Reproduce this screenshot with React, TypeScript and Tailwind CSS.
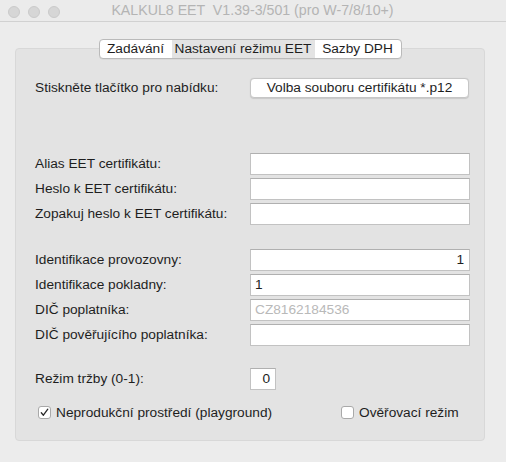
import React from "react";

const font = { fontFamily: '"Liberation Sans", Arial, sans-serif' };

function Field({ label, value, align = "left", muted = false }: { label: string; value?: string; align?: "left" | "right"; muted?: boolean }) {
  return (
    <div className="flex items-center h-[22px]">
      <div className="w-[215px] text-[13.7px] text-[#1e1e1e] leading-none">{label}</div>
      <div
        className={`w-[220px] h-[22px] bg-white border border-[#c2c2c2] border-t-[#b0b0b0] flex items-center text-[13.7px] leading-none ${
          align === "right" ? "justify-end pr-[5px]" : "justify-start pl-[4px]"
        } ${muted ? "text-[#b9b9b9]" : "text-[#1e1e1e]"}`}
      >
        {value}
      </div>
    </div>
  );
}

function Checkbox({ checked, label }: { checked: boolean; label: string }) {
  return (
    <div className="flex items-center gap-[5px]">
      <div className="w-[13px] h-[13px] rounded-[3px] bg-white border border-[#a9a9a9] flex items-center justify-center">
        {checked && (
          <svg width="9" height="9" viewBox="0 0 9 9">
            <path d="M1.3 4.8 L3.4 7.2 L7.8 1.2" fill="none" stroke="#2a2a2a" strokeWidth="1.3" strokeLinecap="round" strokeLinejoin="round" />
          </svg>
        )}
      </div>
      <span className="text-[13.7px] text-[#1e1e1e] leading-none">{label}</span>
    </div>
  );
}

export default function App() {
  return (
    <div className="w-[506px] h-[462px] bg-[#ececec] overflow-hidden" style={font}>
      {/* title bar */}
      <div className="relative h-[22px] bg-[#ebebeb] border-b border-[#d1d1d1] flex items-center justify-center">
        <div className="absolute left-[8px] top-[6px] flex gap-[8px]">
          <div className="w-[12px] h-[12px] rounded-full bg-[#d6d6d6] border border-[#cacaca]" />
          <div className="w-[12px] h-[12px] rounded-full bg-[#d6d6d6] border border-[#cacaca]" />
          <div className="w-[12px] h-[12px] rounded-full bg-[#d6d6d6] border border-[#cacaca]" />
        </div>
        <span className="text-[14.2px] text-[#b4b4b4] whitespace-pre leading-none pr-[1px]">KALKUL8 EET  V1.39-3/501 (pro W-7/8/10+)</span>
      </div>

      <div className="pt-[17px] pl-[15px]">
        {/* tabs */}
        <div className="w-[470px] relative z-10 flex justify-center">
          <div className="flex h-[20px] rounded-[4px] border border-[#bababa] bg-white overflow-hidden shadow-[0_0.5px_0.5px_rgba(0,0,0,0.08)] text-[13.7px] text-[#1e1e1e] leading-none">
            <div className="w-[72px] flex items-center justify-center">Zadávání</div>
            <div className="w-[143px] flex items-center justify-center bg-[#e3e3e3]">Nastavení režimu EET</div>
            <div className="w-[86px] flex items-center justify-center">Sazby DPH</div>
          </div>
        </div>

        {/* panel */}
        <div className="-mt-[11px] w-[470px] h-[393px] rounded-[4px] bg-[#e3e3e3] border border-[#d8d8d8] pl-[19px] pt-[29px]">
          <div className="flex items-center h-[20px]">
            <div className="w-[215px] text-[13.7px] text-[#1e1e1e] leading-none">Stiskněte tlačítko pro nabídku:</div>
            <div className="w-[219px] h-[20px] bg-white rounded-[4px] border border-[#c6c6c6] shadow-[0_0.5px_1px_rgba(0,0,0,0.12)] flex items-center justify-center text-[13.7px] text-[#1e1e1e] leading-none">
              Volba souboru certifikátu *.p12
            </div>
          </div>

          <div className="mt-[55px] flex flex-col gap-[3px]">
            <Field label="Alias EET certifikátu:" />
            <Field label="Heslo k EET certifikátu:" />
            <Field label="Zopakuj heslo k EET certifikátu:" />
          </div>

          <div className="mt-[24px] flex flex-col gap-[3px]">
            <Field label="Identifikace provozovny:" value="1" align="right" />
            <Field label="Identifikace pokladny:" value="1" />
            <Field label="DIČ poplatníka:" value="CZ8162184536" muted />
            <Field label="DIČ pověřujícího poplatníka:" />
          </div>

          <div className="mt-[22px] flex items-center h-[22px]">
            <div className="w-[215px] text-[13.7px] text-[#1e1e1e] leading-none">Režim tržby (0-1):</div>
            <div className="w-[26px] h-[22px] bg-white border border-[#c2c2c2] border-t-[#b0b0b0] flex items-center justify-end pr-[5px] text-[13.7px] text-[#1e1e1e] leading-none">0</div>
          </div>

          <div className="mt-[16px] flex items-center h-[14px] pl-[3px]">
            <div className="w-[303px]">
              <Checkbox checked label="Neprodukční prostředí (playground)" />
            </div>
            <Checkbox checked={false} label="Ověřovací režim" />
          </div>
        </div>
      </div>
    </div>
  );
}
